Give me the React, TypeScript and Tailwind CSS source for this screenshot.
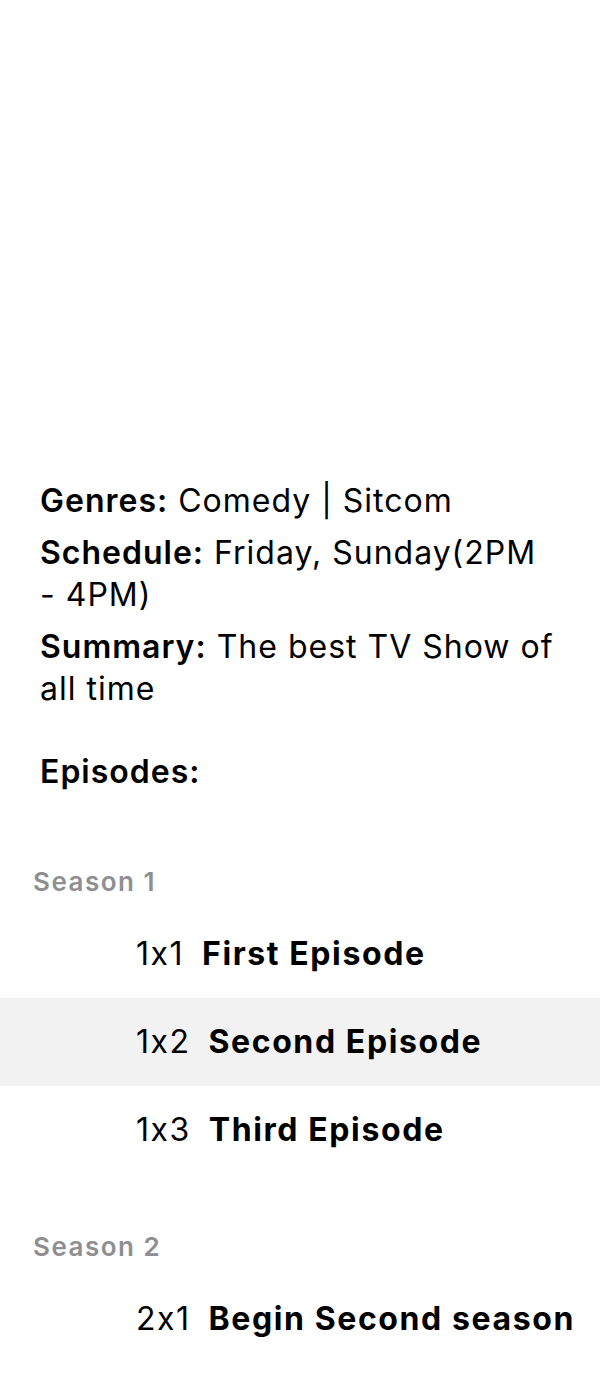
const seasons = [
  {
    name: "Season 1",
    episodes: [
      { num: "1x1", title: "First Episode" },
      { num: "1x2", title: "Second Episode", active: true },
      { num: "1x3", title: "Third Episode" },
    ],
  },
  {
    name: "Season 2",
    episodes: [{ num: "2x1", title: "Begin Second season" }],
  },
];

const App = () => {
  return (
    <div className="min-h-[1400px] w-[600px] bg-white text-black font-['Inter','Roboto',sans-serif]">
      <div className="px-10 pt-[480px] flex flex-col gap-[10px] text-[32px] leading-[42px] tracking-[1px]">
        <p>
          <span className="font-semibold">Genres:</span> Comedy | Sitcom
        </p>
        <p>
          <span className="font-semibold">Schedule:</span> Friday, Sunday(2PM
          -{"\u00a0"}4PM)
        </p>
        <p>
          <span className="font-semibold">Summary:</span> The best TV Show of
          all time
        </p>
        <p className="mt-[31px] font-semibold">Episodes:</p>
      </div>
      <div className="mt-4">
        {seasons.map((season) => (
          <section key={season.name}>
            <h3 className="pl-[33px] pt-[58px] pb-[13px] text-[26px] leading-[30px] font-semibold text-[#8e8e93] tracking-[1.5px]">
              {season.name}
            </h3>
            <ul>
              {season.episodes.map((ep) => (
                <li
                  key={ep.num}
                  className={`flex items-center gap-[18px] h-[88px] pl-[136px] text-[32px] ${
                    ep.active ? "bg-[#f2f2f2]" : "bg-white"
                  }`}
                >
                  <span className="font-normal tracking-[1.5px]">{ep.num}</span>
                  <span className="font-bold tracking-[1.6px]">{ep.title}</span>
                </li>
              ))}
            </ul>
          </section>
        ))}
      </div>
    </div>
  );
};

export default App;
